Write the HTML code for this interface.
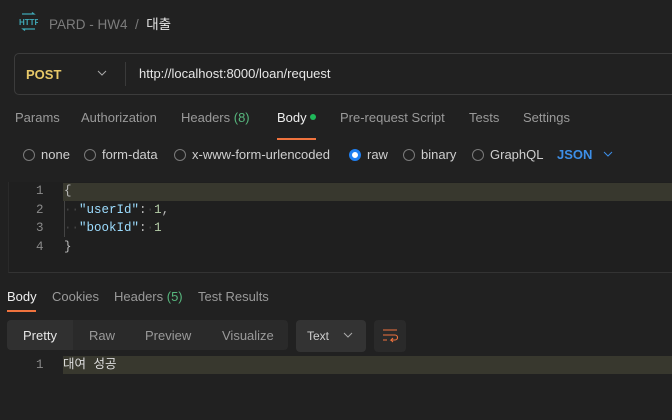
<!DOCTYPE html>
<html><head><meta charset="utf-8"><style>
*{margin:0;padding:0;box-sizing:border-box}
body{width:672px;height:420px;background:#212121;font-family:"Liberation Sans","Noto Sans CJK KR",sans-serif;color:#c8c8c8;position:relative;overflow:hidden;font-size:13px}
.a{position:absolute;white-space:nowrap}
.mono{font-family:"Liberation Mono","Noto Sans CJK KR",monospace;font-size:12.5px}
.r{display:inline-block;width:12px;height:12px;border:1px solid #7a7a7a;border-radius:50%;vertical-align:-2px;margin-right:6px}
</style></head><body>
<svg class="a" style="left:19px;top:12px" width="19" height="19" viewBox="0 0 19 19"><path d="M3 2h12l-2-1.5M16 17H4l2 1.5" stroke="#3fa7b5" fill="none" stroke-width="1.2"/><text x="0" y="13" font-size="8" fill="#3fa7b5" font-family="Liberation Sans" font-weight="bold">HTTP</text></svg>
<div class="a" style="left:49px;top:13px;color:#7c7c7c;font-size:13.5px">PARD - HW4 &nbsp;/&nbsp; <span style="color:#e6e6e6">대출</span></div>
<div class="a" style="left:14px;top:53px;width:680px;height:42px;border:1px solid #3c3c3c;border-radius:5px"></div>
<div class="a" style="left:26px;top:67px;color:#e8c969;font-weight:bold">POST</div>
<svg class="a" style="left:97px;top:70px" width="10" height="7"><path d="M1 1l4 4 4-4" stroke="#aaa" fill="none"/></svg>
<div class="a" style="left:125px;top:62px;width:1px;height:24px;background:#3a3a3a"></div>
<div class="a" style="left:139px;top:66px;color:#e6e6e6">http://localhost:8000/loan/request</div>
<div class="a" style="left:15px;top:110px;color:#9a9a9a">Params</div>
<div class="a" style="left:81px;top:110px;color:#9a9a9a">Authorization</div>
<div class="a" style="left:181px;top:110px;color:#9a9a9a">Headers <span style="color:#57b67d">(8)</span></div>
<div class="a" style="left:277px;top:110px;color:#eee">Body <span style="display:inline-block;width:6px;height:6px;border-radius:50%;background:#1fb85a;vertical-align:2px"></span></div>
<div class="a" style="left:277px;top:138px;width:39px;height:2px;background:#f0733e"></div>
<div class="a" style="left:340px;top:110px;color:#9a9a9a">Pre-request Script</div>
<div class="a" style="left:469px;top:110px;color:#9a9a9a">Tests</div>
<div class="a" style="left:523px;top:110px;color:#9a9a9a">Settings</div>
<div class="a" style="left:23px;top:147px;color:#cfcfcf"><span class="r"></span>none</div>
<div class="a" style="left:84px;top:147px;color:#cfcfcf"><span class="r"></span>form-data</div>
<div class="a" style="left:174px;top:147px;color:#cfcfcf"><span class="r"></span>x-www-form-urlencoded</div>
<div class="a" style="left:349px;top:147px;color:#cfcfcf"><span class="r" style="border:3px solid #1f7ff0;background:#fff"></span>raw</div>
<div class="a" style="left:403px;top:147px;color:#cfcfcf"><span class="r"></span>binary</div>
<div class="a" style="left:472px;top:147px;color:#cfcfcf"><span class="r"></span>GraphQL</div>
<div class="a" style="left:557px;top:147px;color:#3d8fe8;font-weight:bold">JSON</div>
<svg class="a" style="left:603px;top:151px" width="10" height="7"><path d="M1 1l4 4 4-4" stroke="#3d8fe8" fill="none"/></svg>
<div class="a" style="left:8px;top:182px;width:664px;height:91px;border-left:1px solid #2a2a2a;border-bottom:1px solid #333;background:#1f1f1f"></div>
<div class="a" style="left:63px;top:183px;width:609px;height:18px;background:#38382e"></div>
<div class="a" style="left:64px;top:201px;width:1px;height:36px;background:#444"></div>
<div class="a mono" style="left:36px;top:182px;color:#8a8a8a;line-height:18.5px">1<br>2<br>3<br>4</div>
<div class="a mono" style="left:64px;top:182px;color:#bbb;line-height:18.5px">{<br><span style="color:#444">··</span><span style="color:#9cdcfe">"userId"</span>:<span style="color:#444">·</span><span style="color:#b5cea8">1</span>,<br><span style="color:#444">··</span><span style="color:#9cdcfe">"bookId"</span>:<span style="color:#444">·</span><span style="color:#b5cea8">1</span><br>}</div>
<div class="a" style="left:7px;top:289px;color:#eee">Body</div>
<div class="a" style="left:7px;top:310px;width:29px;height:2px;background:#f0733e"></div>
<div class="a" style="left:52px;top:289px;color:#9a9a9a">Cookies</div>
<div class="a" style="left:114px;top:289px;color:#9a9a9a">Headers <span style="color:#57b67d">(5)</span></div>
<div class="a" style="left:198px;top:289px;color:#9a9a9a">Test Results</div>
<div class="a" style="left:7px;top:320px;width:281px;height:30px;background:#2a2a2a;border-radius:4px"></div>
<div class="a" style="left:7px;top:320px;width:66px;height:30px;background:#303030;border-radius:4px 0 0 4px"></div>
<div class="a" style="left:23px;top:328px;color:#e6e6e6">Pretty</div>
<div class="a" style="left:89px;top:328px;color:#9a9a9a">Raw</div>
<div class="a" style="left:145px;top:328px;color:#9a9a9a">Preview</div>
<div class="a" style="left:222px;top:328px;color:#9a9a9a">Visualize</div>
<div class="a" style="left:296px;top:320px;width:70px;height:32px;background:#333;border-radius:4px"></div>
<div class="a" style="left:307px;top:329px;color:#cfcfcf;font-size:12px">Text</div>
<svg class="a" style="left:343px;top:332px" width="10" height="7"><path d="M1 1l4 4 4-4" stroke="#aaa" fill="none"/></svg>
<div class="a" style="left:374px;top:320px;width:32px;height:32px;background:#2a2a2a;border-radius:4px"></div>
<svg class="a" style="left:382px;top:329px" width="16" height="14" viewBox="0 0 16 14"><path d="M1 1h14M1 6h12a2.5 2.5 0 0 1 0 5H9l2-2M9 11l2 2M1 11h4" stroke="#f0733e" fill="none" stroke-width="1.1"/></svg>
<div class="a" style="left:63px;top:356px;width:609px;height:18px;background:#38382e"></div>
<div class="a mono" style="left:36px;top:356px;color:#8a8a8a;line-height:18px;height:18px">1</div>
<div class="a mono" style="left:63px;top:356px;color:#ddd;line-height:18px;height:18px">대여 성공</div>
</body></html>
